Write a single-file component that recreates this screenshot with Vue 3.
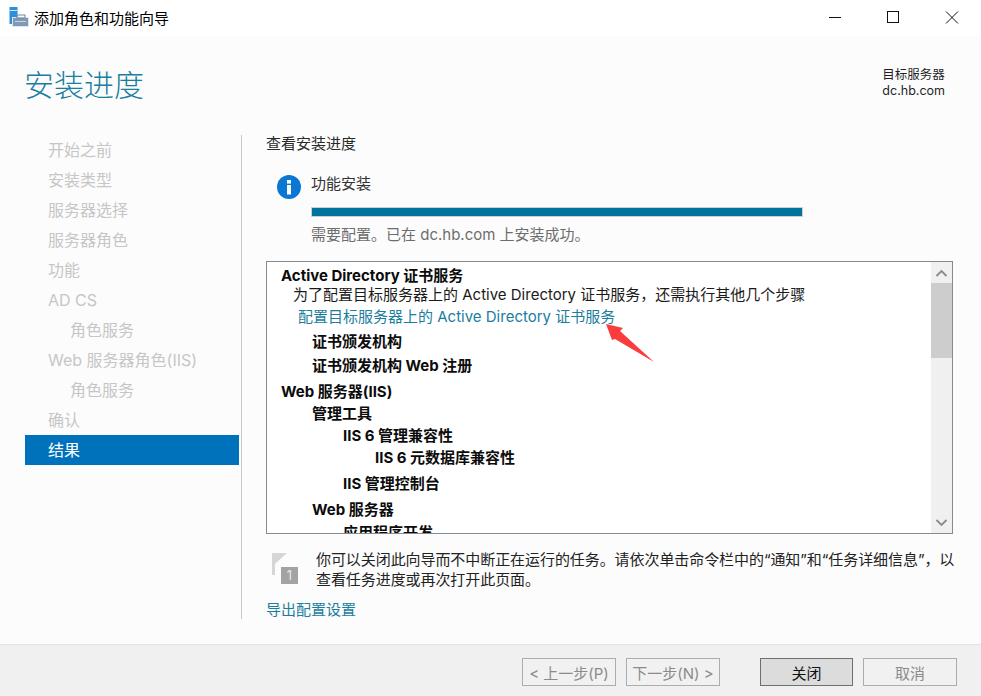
<script setup>
const steps = [
  { label: '开始之前' },
  { label: '安装类型' },
  { label: '服务器选择' },
  { label: '服务器角色' },
  { label: '功能' },
  { label: 'AD CS' },
  { label: '角色服务', sub: true },
  { label: 'Web 服务器角色(IIS)' },
  { label: '角色服务', sub: true },
  { label: '确认' },
  { label: '结果', active: true }
]
const rows = [
  { text: 'Active Directory 证书服务', cls: 'b l0', gap: 0 },
  { text: '为了配置目标服务器上的 Active Directory 证书服务，还需执行其他几个步骤', cls: 'l0n', gap: -1 },
  { text: '配置目标服务器上的 Active Directory 证书服务', cls: 'link', gap: 2 },
  { text: '证书颁发机构', cls: 'b l1', gap: 5 },
  { text: '证书颁发机构 Web 注册', cls: 'b l1', gap: 4 },
  { text: 'Web 服务器(IIS)', cls: 'b l0', gap: 6 },
  { text: '管理工具', cls: 'b l1', gap: 2 },
  { text: 'IIS 6 管理兼容性', cls: 'b l2', gap: 2 },
  { text: 'IIS 6 元数据库兼容性', cls: 'b l3', gap: 2 },
  { text: 'IIS 管理控制台', cls: 'b l2', gap: 6 },
  { text: 'Web 服务器', cls: 'b l1', gap: 6 },
  { text: '应用程序开发', cls: 'b l2', gap: 3 }
]
</script>

<template>
  <div class="win">
    <header class="titlebar">
      <svg class="appicon" width="20" height="20" viewBox="0 0 20 20">
        <rect x="0.500" y="0" width="8" height="17" fill="#2b8fdc" />
        <rect x="1" y="3" width="7" height="1" fill="#cfe6f7" />
        <rect x="3" y="10" width="17" height="10" fill="#dbe6f0" />
        <rect x="4" y="11" width="15" height="8" fill="#7f9bb3" />
        <rect x="8" y="8" width="8" height="3" fill="none" stroke="#6d8aa3" />
        <rect x="6" y="14" width="11" height="1" fill="#c8d6e2" />
      </svg>
      <span class="wintitle">添加角色和功能向导</span>
      <div class="controls">
        <svg width="58" height="34" viewBox="0 0 58 34"><path d="M22 16.500h12" stroke="#111" fill="none" /></svg>
        <svg width="58" height="34" viewBox="0 0 58 34"><rect x="22.500" y="10.500" width="11" height="11" stroke="#111" fill="none" /></svg>
        <svg width="58" height="34" viewBox="0 0 58 34"><path d="M23 10.500l12 12M35 10.500L23 22.500" stroke="#111" fill="none" /></svg>
      </div>
    </header>

    <section class="hero">
      <h1>安装进度</h1>
      <div class="target">目标服务器<br />dc.hb.com</div>
    </section>

    <main class="body">
      <nav class="side">
        <div v-for="s in steps" :key="s.label + s.sub" class="step" :class="{ sub: s.sub, active: s.active }">{{ s.label }}</div>
      </nav>
      <div class="content">
        <div class="lead">查看安装进度</div>
        <div class="status">
          <svg class="info" width="24" height="24" viewBox="0 0 24 24">
            <circle cx="12" cy="12" r="12" fill="#0a78d2" />
            <rect x="10" y="5" width="4" height="3.600" fill="#fff" />
            <rect x="10" y="10" width="4" height="9.500" fill="#fff" />
          </svg>
          <div class="statusbody">
            <div class="statustitle">功能安装</div>
            <div class="bar"><div class="fill"></div></div>
            <div class="statusmsg">需要配置。已在 dc.hb.com 上安装成功。</div>
          </div>
        </div>

        <div class="tree">
          <div class="rows">
            <div v-for="(r, i) in rows" :key="i" class="row" :class="r.cls" :style="{ marginTop: r.gap + 'px' }">{{ r.text }}</div>
          </div>
          <div class="scroll">
            <div class="sbtn">
              <svg width="13" height="8" viewBox="0 0 13 8"><path d="M1.500 7l5-5 5 5" stroke="#8a8a8a" stroke-width="1.800" fill="none" /></svg>
            </div>
            <div class="thumb"></div>
            <div class="track"></div>
            <div class="sbtn">
              <svg width="13" height="8" viewBox="0 0 13 8"><path d="M1.500 1l5 5 5-5" stroke="#8a8a8a" stroke-width="1.800" fill="none" /></svg>
            </div>
          </div>
          <svg class="arrow" width="50" height="40" viewBox="0 0 50 40">
            <path d="M0 0L17 4L14 7L48 38L9 15L6 16Z" fill="#fb3c3c" />
          </svg>
        </div>

        <div class="note">
          <svg class="flag" width="28" height="34" viewBox="0 0 28 34">
            <rect x="1" y="1" width="3" height="22" fill="#d6d6d6" />
            <path d="M4 1h12L4 12z" fill="#d6d6d6" />
            <rect x="10" y="15" width="17" height="17" fill="#a3a3a3" />
            <text x="18.500" y="28" text-anchor="middle" class="flagnum">1</text>
          </svg>
          <p>你可以关闭此向导而不中断正在运行的任务。请依次单击命令栏中的“通知”和“任务详细信息”，以<br />查看任务进度或再次打开此页面。</p>
        </div>
        <a class="export">导出配置设置</a>
      </div>
    </main>

    <footer class="foot">
      <button class="btn dis">&lt; 上一步(P)</button>
      <button class="btn dis next">下一步(N) &gt;</button>
      <button class="btn primary">关闭</button>
      <button class="btn dis cancel">取消</button>
    </footer>
  </div>
</template>

<style scoped>
.win {
  width: 981px;
  height: 696px;
  display: flex;
  flex-direction: column;
  background: #fcfcfc;
  font-family: Inter, "Noto Sans CJK SC", sans-serif;
  font-size: 15px;
  color: #1f1f1f;
  overflow: hidden;
}
.titlebar {
  height: 36px;
  flex: none;
  background: #fff;
  display: flex;
  align-items: center;
  padding-left: 9px;
}
.appicon { flex: none; margin-top: -2px; }
.wintitle {
  margin-left: 5px;
  color: #000;
  margin-top: -1px;
}
.controls {
  margin-left: auto;
  display: flex;
}
.controls svg { display: block; }
.hero {
  height: 99px;
  flex: none;
  display: flex;
  justify-content: space-between;
  padding: 0 36px 0 24px;
}
.hero h1 {
  margin: 27px 0 0;
  font-size: 30px;
  line-height: 44px;
  font-weight: 300;
  color: #1a7e9e;
}
.target {
  margin-top: 31px;
  font-size: 12.500px;
  line-height: 16px;
  color: #1f1f1f;
}
.body {
  flex: 1;
  display: flex;
  min-height: 0;
}
.side {
  width: 214px;
  margin-left: 25px;
  flex: none;
}
.step {
  height: 30px;
  line-height: 30px;
  padding-left: 23px;
  font-size: 16px;
  color: #c6c6c6;
  white-space: nowrap;
}
.step.sub { padding-left: 45px; }
.step.active {
  background: #0072bc;
  color: #fff;
}
.content {
  position: relative;
  margin-left: 2px;
  width: 712px;
  height: 484px;
  border-left: 1px solid #c8c8c8;
  padding-left: 24px;
  box-sizing: border-box;
}
.lead { line-height: 20px; margin-top: -1px; color: #2a2a2a; }
.status {
  display: flex;
  margin: 21px 0 0 11px;
  height: 84px;
}
.info { flex: none; }
.statusbody { margin-left: 10px; width: 492px; }
.statustitle { line-height: 20px; margin-top: -1px; color: #333; }
.bar {
  margin-top: 13px;
  height: 10px;
  background: #cfcfcf;
  padding: 1px;
  box-sizing: border-box;
}
.fill { height: 100%; background: #00749c; }
.statusmsg { margin-top: 8px; line-height: 20px; color: #6d6d6d; }
.tree {
  position: relative;
  width: 687px;
  height: 273px;
  margin-top: 2px;
  border: 1px solid #838b97;
  box-sizing: border-box;
  background: #fff;
  display: flex;
  overflow: hidden;
}
.rows { flex: 1; padding-top: 4px; overflow: hidden; }
.row {
  height: 20px;
  line-height: 20px;
  white-space: pre;
  color: #111;
}
.b { font-weight: 700; color: #0c0c0c; }
.l0 { padding-left: 14px; }
.l0n { padding-left: 26px; color: #1a1a1a; }
.link { padding-left: 31px; color: #1a7e9e; }
.l1 { padding-left: 45px; }
.l2 { padding-left: 76px; }
.l3 { padding-left: 108px; }
.scroll {
  width: 21px;
  flex: none;
  background: #f0f0f0;
  display: flex;
  flex-direction: column;
}
.sbtn {
  height: 21px;
  flex: none;
  display: flex;
  align-items: center;
  justify-content: center;
}
.thumb { height: 75px; flex: none; background: #cdcdcd; }
.track { flex: 1; }
.arrow { position: absolute; left: 339px; top: 62px; }
.note {
  display: flex;
  margin: 17px 0 0 5px;
  height: 42px;
}
.flag { flex: none; margin-top: 1px; }
.flagnum { font-size: 13px; fill: #e8e8e8; font-family: Inter, sans-serif; }
.note p {
  margin: -1px 0 0 17px;
  line-height: 19.500px;
  letter-spacing: -0.070px;
  white-space: nowrap;
  color: #222;
}
.export {
  display: block;
  margin-top: 7px;
  line-height: 20px;
  color: #1a7e9e;
}
.foot {
  height: 52px;
  flex: none;
  background: #f0f0f0;
  border-top: 1px solid #e3e3e3;
  display: flex;
  align-items: flex-start;
  padding: 13px 0 0 522px;
  box-sizing: border-box;
}
.btn {
  width: 94px;
  height: 28px;
  box-sizing: border-box;
  font: inherit;
  padding: 0;
  background: #f1f1f1;
  border: 1px solid #adadad;
  color: #8b8b8b;
}
.next { margin-left: 10px; }
.primary {
  width: 93px;
  margin-left: 40px;
  background: #dcdcdc;
  border-color: #6f6f6f;
  color: #111;
}
.cancel { margin-left: 10px; }
</style>

<style>
html, body { margin: 0; padding: 0; background: #fcfcfc; }
</style>
